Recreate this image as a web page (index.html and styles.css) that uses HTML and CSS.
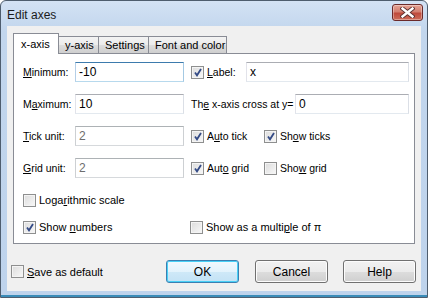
FILE: index.html
```html
<!DOCTYPE html>
<html>
<head>
<meta charset="utf-8">
<link rel="stylesheet" href="styles.css">
</head>
<body>
<div class="window">
  <div class="titlebar">
    <span class="title">Edit axes</span>
    <span class="close">
      <svg width="15" height="11" viewBox="0 0 15 11">
        <path d="M2.5 1.5 L12.5 9.5 M12.5 1.5 L2.5 9.5" stroke="#5a3030" stroke-width="4.2" stroke-linecap="square"/>
        <path d="M2.5 1.5 L12.5 9.5 M12.5 1.5 L2.5 9.5" stroke="#ffffff" stroke-width="2.4" stroke-linecap="square"/>
      </svg>
    </span>
  </div>
  <div class="client">
    <div class="tabs">
      <div class="tab active">x-axis</div>
      <div class="tab">y-axis</div>
      <div class="tab">Settings</div>
      <div class="tab">Font and color</div>
    </div>
    <div class="panel">
      <div class="row">
        <div class="left"><span class="lbl"><u>M</u>inimum:</span><span class="input focus">-10</span></div>
        <div class="right">
          <span class="cb checked"></span><span class="cbtext"><u>L</u>abel:</span>
          <span class="input wide">x</span>
        </div>
      </div>
      <div class="row">
        <div class="left"><span class="lbl">M<u>a</u>ximum:</span><span class="input">10</span></div>
        <div class="right">
          <span class="plain">Th<u>e</u> x-axis cross at y=</span>
          <span class="input narrow">0</span>
        </div>
      </div>
      <div class="row">
        <div class="left"><span class="lbl"><u>T</u>ick unit:</span><span class="input disabled">2</span></div>
        <div class="right">
          <span class="opt"><span class="cb checked"></span><span class="cbtext">A<u>u</u>to tick</span></span>
          <span class="opt"><span class="cb checked"></span><span class="cbtext">Sh<u>o</u>w ticks</span></span>
        </div>
      </div>
      <div class="row">
        <div class="left"><span class="lbl"><u>G</u>rid unit:</span><span class="input disabled">2</span></div>
        <div class="right">
          <span class="opt"><span class="cb checked"></span><span class="cbtext">Aut<u>o</u> grid</span></span>
          <span class="opt"><span class="cb"></span><span class="cbtext">Sho<u>w</u> grid</span></span>
        </div>
      </div>
      <div class="row crow log">
        <div class="left"><span class="cb"></span><span class="cbtext">Loga<u>r</u>ithmic scale</span></div>
      </div>
      <div class="row crow nums">
        <div class="left"><span class="cb checked"></span><span class="cbtext">Show <u>n</u>umbers</span></div>
        <div class="right"><span class="cb"></span><span class="cbtext">Show as a multi<u>p</u>le of π</span></div>
      </div>
    </div>
    <div class="footer">
      <div class="save"><span class="cb"></span><span class="cbtext"><u>S</u>ave as default</span></div>
      <div class="buttons">
        <span class="btn default">OK</span>
        <span class="btn">Cancel</span>
        <span class="btn">Help</span>
      </div>
    </div>
  </div>
</div>
</body>
</html>
```
FILE: styles.css
```css
* { box-sizing: border-box; }
html, body { margin: 0; padding: 0; }
body {
  width: 428px;
  height: 298px;
  font-family: "Liberation Sans", Arial, sans-serif;
  font-size: 10.5px;
  color: #000;
  background: #fff;
}
u { text-decoration: underline; text-underline-offset: 1px; }
.window {
  width: 428px;
  height: 298px;
  border: 1px solid #4e5d6e;
  border-radius: 6px 6px 0 0;
  background: linear-gradient(#d3e2f4, #c2d6ed 30px, #bed3ec);
  display: flex;
  flex-direction: column;
  box-shadow: inset 0 -2px 0 #3a8cb8;
}
.titlebar {
  height: 25px;
  display: flex;
  align-items: flex-start;
  justify-content: space-between;
  flex: none;
}
.title {
  font-size: 12px;
  color: #1a1a1a;
  margin: 7px 0 0 6px;
}
.close {
  width: 31px;
  height: 17px;
  margin: 3px 4px 0 0;
  border: 1px solid #6b2a2a;
  border-radius: 3px;
  background: linear-gradient(#e6a395, #d37f70 45%, #bf4a3c 55%, #cd6d5a);
  box-shadow: inset 0 0 0 1px rgba(255,255,255,0.35);
  display: flex;
  align-items: center;
  justify-content: center;
}
.client {
  flex: 1;
  margin: 0 6px 6px 6px;
  background: #f0f0f0;
  padding: 7px 6px 0 6px;
  display: flex;
  flex-direction: column;
}
.tabs {
  display: flex;
  align-items: flex-end;
  height: 20px;
  position: relative;
  z-index: 1;
}
.tab {
  height: 17px;
  border: 1px solid #898c95;
  border-bottom: none;
  border-left: none;
  background: linear-gradient(#f3f3f3, #ebebeb 50%, #dddddd 50%, #cfcfcf);
  padding: 2px 6px 0 6px;
  white-space: nowrap;
  font-size: 11px;
}
.tab:nth-child(2) { width: 40px; }
.tab:nth-child(3) { width: 50px; }
.tab:nth-child(4) { width: 78px; }
.tab.active {
  width: 46px;
  height: 21px;
  margin-bottom: -1px;
  background: #fff;
  border-left: 1px solid #898c95;
  border-right: 1px solid #898c95;
  padding: 4px 0 0 7px;
}
.panel {
  height: 191px;
  background: #fff;
  border: 1px solid #898c95;
  padding: 8px 5px 0 9px;
  display: flex;
  flex-direction: column;
  gap: 12px;
}
.row {
  display: flex;
  align-items: center;
  height: 20px;
}
.left {
  width: 161px;
  display: flex;
  align-items: center;
  flex: none;
}
.right {
  flex: 1;
  margin-left: 7px;
  display: flex;
  align-items: center;
}
.lbl { width: 52px; flex: none; }
.input {
  height: 20px;
  width: 109px;
  border: 1px solid #abadb3;
  border-color: #abadb3 #dbdfe6 #e3e9ef #e2e3ea;
  background: #fff;
  font-size: 12px;
  padding: 2px 0 0 3px;
  line-height: 15px;
  flex: none;
}
.input.focus {
  border-color: #3d7bad #a4c9e3 #b7d9ed #b5cfe7;
}
.input.disabled { color: #6d6d6d; border-color: #adb2b5 #cdd0d3 #d6d9dc #cdd0d3; }
.input.wide { width: 163px; margin-left: auto; }
.input.narrow { width: 114px; margin-left: auto; }
.cb {
  width: 13px;
  height: 13px;
  flex: none;
  border: 1px solid #8e8f8f;
  background: linear-gradient(135deg, #dcdcdc, #f8f8f8);
  box-shadow: inset 0 0 0 1px #f4f4f4;
  position: relative;
}
.cb.checked::after {
  content: "";
  position: absolute;
  left: 2px;
  top: 1px;
  width: 8px;
  height: 9px;
  background: url("data:image/svg+xml;utf8,<svg xmlns='http://www.w3.org/2000/svg' width='8' height='9' viewBox='0 0 8 9'><path d='M1 4.5 L3 7.3 L7 1' fill='none' stroke='%23344b86' stroke-width='1.8'/></svg>") no-repeat;
}
.cbtext { margin-left: 3px; white-space: nowrap; }
.opt { display: flex; align-items: center; width: 73px; flex: none; }
.plain { white-space: nowrap; }
.crow.nums { margin-top: -5px; }
.crow .right { margin-left: 6px; }
.crow .cbtext, .save .cbtext { font-size: 11px; }
.footer {
  margin-top: 16px;
  height: 23px;
  display: flex;
  align-items: center;
  justify-content: space-between;
  margin-left: -2px;
  margin-right: -1px;
}
.save { display: flex; align-items: center; }
.buttons { display: flex; gap: 15px; }
.btn {
  width: 73px;
  height: 23px;
  border: 1px solid #707070;
  border-radius: 3px;
  background: linear-gradient(#f2f2f2, #ebebeb 50%, #dddddd 50%, #cfcfcf);
  box-shadow: inset 0 0 0 1px #fcfcfc;
  display: flex;
  align-items: center;
  justify-content: center;
  font-size: 12px;
}
.btn.default {
  border-color: #3c7fb1;
  background: linear-gradient(#f1f9fe, #e3f3fc 50%, #cfe9f8 50%, #c3e2f5);
  box-shadow: inset 0 0 0 1px #48d0f6;
}
.buttons .btn:first-child { margin-right: 1px; }
```
